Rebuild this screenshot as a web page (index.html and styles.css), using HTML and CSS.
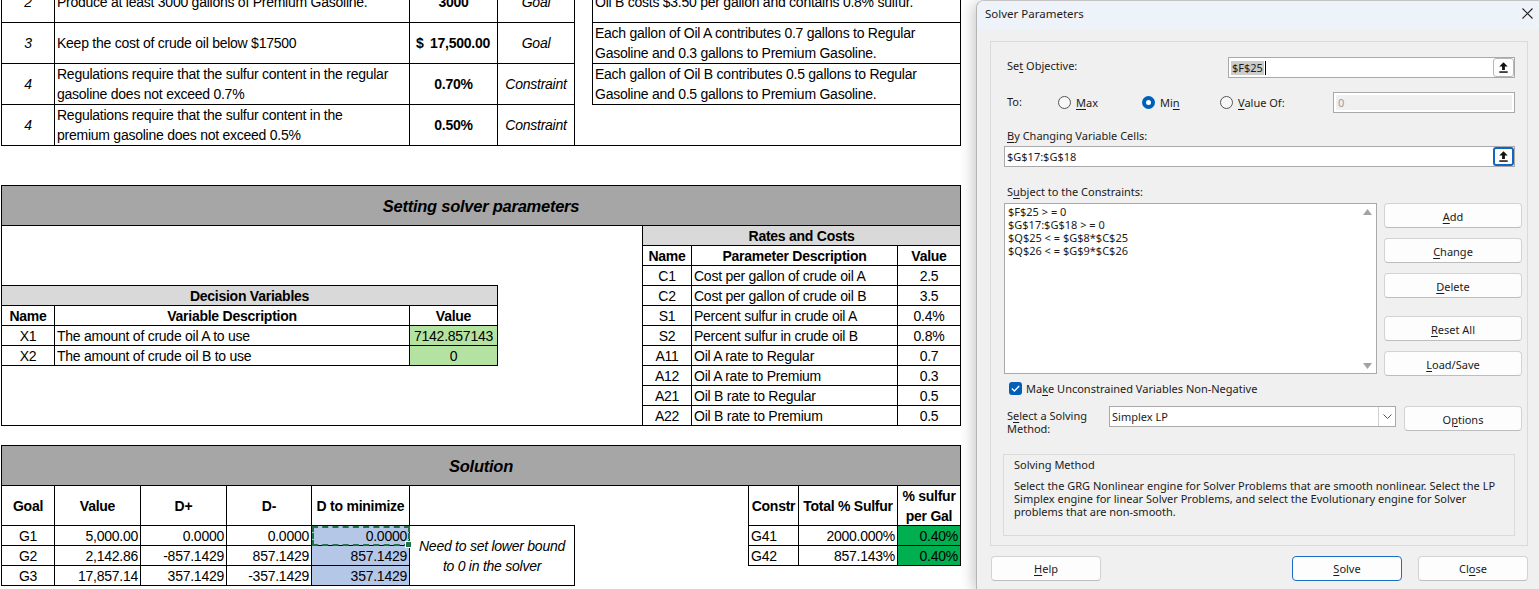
FILE: index.html
```html
<!DOCTYPE html>
<html>
<head>
<meta charset="utf-8">
<title>Solver Parameters</title>
<link rel="stylesheet" href="styles.css">
</head>
<body>
<div class="sheet">
  <div class="sec1">
    <div class="goals">
      <div class="c num">2</div>
      <div class="c desc">Produce at least 3000 gallons of Premium Gasoline.</div>
      <div class="c val">3000</div>
      <div class="c kind">Goal</div>
      <div class="c num">3</div>
      <div class="c desc">Keep the cost of crude oil below $17500</div>
      <div class="c val acct"><span>$</span><span>17,500.00</span></div>
      <div class="c kind">Goal</div>
      <div class="c num">4</div>
      <div class="c desc">Regulations require that the sulfur content in the regular<br>gasoline does not exceed 0.7%</div>
      <div class="c val">0.70%</div>
      <div class="c kind">Constraint</div>
      <div class="c num end">4</div>
      <div class="c desc end">Regulations require that the sulfur content in the<br>premium gasoline does not exceed 0.5%</div>
      <div class="c val end">0.50%</div>
      <div class="c kind end">Constraint</div>
    </div>
    <div class="notes">
      <div class="note">Oil B costs $3.50 per gallon and contains 0.8% sulfur.</div>
      <div class="note">Each gallon of Oil A contributes 0.7 gallons to Regular<br>Gasoline and 0.3 gallons to Premium Gasoline.</div>
      <div class="note">Each gallon of Oil B contributes 0.5 gallons to Regular<br>Gasoline and 0.5 gallons to Premium Gasoline.</div>
    </div>
  </div>

  <div class="sec2">
    <div class="band">Setting solver parameters</div>
    <div class="sec2-body">
      <div class="dv">
        <div class="c hd span3">Decision Variables</div>
        <div class="c b">Name</div>
        <div class="c b">Variable Description</div>
        <div class="c b">Value</div>
        <div class="c">X1</div>
        <div class="c l">The amount of crude oil A to use</div>
        <div class="c green">7142.857143</div>
        <div class="c">X2</div>
        <div class="c l">The amount of crude oil B to use</div>
        <div class="c green">0</div>
      </div>
      <div class="rates">
        <div class="c hd span3 nr">Rates and Costs</div>
        <div class="c b">Name</div>
        <div class="c b">Parameter Description</div>
        <div class="c b nr">Value</div>
        <div class="c">C1</div><div class="c l">Cost per gallon of crude oil A</div><div class="c nr">2.5</div>
        <div class="c">C2</div><div class="c l">Cost per gallon of crude oil B</div><div class="c nr">3.5</div>
        <div class="c">S1</div><div class="c l">Percent sulfur in crude oil A</div><div class="c nr">0.4%</div>
        <div class="c">S2</div><div class="c l">Percent sulfur in crude oil B</div><div class="c nr">0.8%</div>
        <div class="c">A11</div><div class="c l">Oil A rate to Regular</div><div class="c nr">0.7</div>
        <div class="c">A12</div><div class="c l">Oil A rate to Premium</div><div class="c nr">0.3</div>
        <div class="c">A21</div><div class="c l">Oil B rate to Regular</div><div class="c nr">0.5</div>
        <div class="c nb">A22</div><div class="c l nb">Oil B rate to Premium</div><div class="c nr nb">0.5</div>
      </div>
    </div>
  </div>

  <div class="sec3">
    <div class="band">Solution</div>
    <div class="sec3-body">
      <div class="sol">
        <div class="c b">Goal</div>
        <div class="c b">Value</div>
        <div class="c b">D+</div>
        <div class="c b">D-</div>
        <div class="c b">D to minimize</div>
        <div class="c nr"></div>
        <div class="c">G1</div>
        <div class="c r">5,000.00</div>
        <div class="c r">0.0000</div>
        <div class="c r">0.0000</div>
        <div class="c r blue copy">0.0000</div>
        <div class="c memo">Need to set lower bound<br>to 0 in the solver</div>
        <div class="c">G2</div>
        <div class="c r">2,142.86</div>
        <div class="c r">-857.1429</div>
        <div class="c r">857.1429</div>
        <div class="c r blue">857.1429</div>
        <div class="c">G3</div>
        <div class="c r">17,857.14</div>
        <div class="c r">357.1429</div>
        <div class="c r">-357.1429</div>
        <div class="c r blue">357.1429</div>
      </div>
      <div class="constr">
        <div class="c b">Constr</div>
        <div class="c b">Total % Sulfur</div>
        <div class="c b two">% sulfur<br>per Gal</div>
        <div class="c l">G41</div>
        <div class="c r">2000.000%</div>
        <div class="c r dgreen">0.40%</div>
        <div class="c l">G42</div>
        <div class="c r">857.143%</div>
        <div class="c r dgreen">0.40%</div>
      </div>
    </div>
  </div>
</div>

<div class="dialog">
  <div class="titlebar">
    <span>Solver Parameters</span>
    <svg class="close" width="11" height="11" viewBox="0 0 11 11"><path d="M0.5 0.5 L10.5 10.5 M10.5 0.5 L0.5 10.5" stroke="#222" stroke-width="1.1" fill="none"/></svg>
  </div>
  <div class="panel">
    <div class="row obj-row">
      <span class="lbl obj-lbl">Se<u>t</u> Objective:</span>
      <div class="input obj">
        <span class="sel">$F$25</span><span class="caret"></span>
        <span class="ref"><svg width="9" height="11" viewBox="0 0 9 11"><path d="M4.5 0.3 L8.7 4.6 H5.9 V8 H3.1 V4.6 H0.3 Z" fill="#111"/><rect x="0.3" y="9.3" width="8.4" height="1.5" fill="#111"/></svg></span>
      </div>
    </div>
    <div class="row to-row">
      <span class="lbl to-lbl">To:</span>
      <span class="radio r-max"><i class="rb"></i><span><u>M</u>ax</span></span>
      <span class="radio r-min"><i class="rb on"></i><span>Mi<u>n</u></span></span>
      <span class="radio r-val"><i class="rb"></i><span><u>V</u>alue Of:</span></span>
      <div class="input dis">0</div>
    </div>
    <div class="lbl by-lbl"><u>B</u>y Changing Variable Cells:</div>
    <div class="input var">
      <span class="vtext">$G$17:$G$18</span>
      <span class="ref focus"><svg width="9" height="11" viewBox="0 0 9 11"><path d="M4.5 0.3 L8.7 4.6 H5.9 V8 H3.1 V4.6 H0.3 Z" fill="#111"/><rect x="0.3" y="9.3" width="8.4" height="1.5" fill="#111"/></svg></span>
    </div>
    <div class="lbl subj-lbl">S<u>u</u>bject to the Constraints:</div>
    <div class="cons">
      <div class="list">
        <div class="items">
          <div>$F$25 &gt; = 0</div>
          <div>$G$17:$G$18 &gt; = 0</div>
          <div>$Q$25 &lt; = $G$8*$C$25</div>
          <div>$Q$26 &lt; = $G$9*$C$26</div>
        </div>
        <div class="sb">
          <svg width="9" height="6" viewBox="0 0 9 6"><path d="M0 6 L4.5 0 L9 6 Z" fill="#a3a3a3"/></svg>
          <svg width="9" height="6" viewBox="0 0 9 6"><path d="M0 0 L4.5 6 L9 0 Z" fill="#a3a3a3"/></svg>
        </div>
      </div>
      <div class="btns">
        <span class="btn"><span><u>A</u>dd</span></span>
        <span class="btn"><span><u>C</u>hange</span></span>
        <span class="btn"><span><u>D</u>elete</span></span>
        <span class="btn gap"><span><u>R</u>eset All</span></span>
        <span class="btn"><span><u>L</u>oad/Save</span></span>
      </div>
    </div>
    <div class="chkrow">
      <span class="cb"><svg width="9" height="7" viewBox="0 0 9 7"><path d="M0.8 3.6 L3.4 6 L8.2 0.9" stroke="#fff" stroke-width="1.4" fill="none"/></svg></span>
      <span>Ma<u>k</u>e Unconstrained Variables Non-Negative</span>
    </div>
    <div class="method">
      <span class="lbl m-lbl">S<u>e</u>lect a Solving<br>Method:</span>
      <div class="dropdown">
        <span class="dtext">Simplex LP</span>
        <span class="chev"><svg width="9" height="5" viewBox="0 0 9 5"><path d="M0.5 0.5 L4.5 4.5 L8.5 0.5" stroke="#555" fill="none"/></svg></span>
      </div>
      <span class="btn opt"><span>O<u>p</u>tions</span></span>
    </div>
    <div class="smbox">
      <div class="sm-title">Solving Method</div>
      <div class="sm-text">Select the GRG Nonlinear engine for Solver Problems that are smooth nonlinear. Select the LP<br>Simplex engine for linear Solver Problems, and select the Evolutionary engine for Solver<br>problems that are non-smooth.</div>
    </div>
  </div>
  <div class="footer">
    <span class="btn fbtn"><span><u>H</u>elp</span></span>
    <span class="btn fbtn solve"><span><u>S</u>olve</span></span>
    <span class="btn fbtn close-btn"><span>Cl<u>o</u>se</span></span>
  </div>
</div>
</body>
</html>
```

FILE: styles.css
```css
* { box-sizing: border-box; }
html, body { margin: 0; padding: 0; }
body {
  width: 1539px;
  height: 589px;
  overflow: hidden;
  background: #fff;
  display: flex;
  align-items: flex-start;
  font-family: "Liberation Sans", Arial, sans-serif;
  color: #000;
}

/* ---------- spreadsheet ---------- */
.sheet {
  width: 976px;
  flex: none;
  padding-left: 1px;
  font-size: 14px;
  letter-spacing: -0.25px;
}
.c {
  display: flex;
  align-items: center;
  justify-content: center;
  white-space: nowrap;
  overflow: hidden;
  line-height: 20px;
  padding-top: 1px;
  border-right: 1px solid #000;
  border-bottom: 1px solid #000;
}
.c.l { justify-content: flex-start; padding-left: 2px; }
.c.r { justify-content: flex-end; padding-right: 2px; }
.c.b { font-weight: bold; }
.c.nr { border-right: none; }
.c.nb { border-bottom: none; }

.sec1 {
  display: flex;
  width: 960px;
  margin-top: -18px;
  border-left: 1px solid #000;
  border-right: 1px solid #000;
  border-bottom: 1px solid #000;
}
.goals {
  display: grid;
  grid-template-columns: 53px 355px 88px 77px;
  grid-template-rows: 41px 41px 41px 40px;
}
.goals .c { line-height: 20px; padding-top: 0; }
.goals .end { border-bottom: none; }
.goals .num { font-style: italic; }
.goals .desc { justify-content: flex-start; padding-left: 2px; }
.goals .val { font-weight: bold; }
.goals .acct { justify-content: space-between; padding: 0 7px 0 6px; }
.goals .kind { font-style: italic; }
.notes {
  margin-left: 17px;
  width: 368px;
  align-self: flex-start;
  display: grid;
  grid-template-rows: 41px 41px 41px;
}
.note {
  display: flex;
  align-items: center;
  padding-left: 2px;
  line-height: 20px;
  white-space: nowrap;
  border-left: 1px solid #000;
  border-bottom: 1px solid #000;
}

.band {
  height: 40px;
  padding-top: 2px;
  background: #a6a6a6;
  border-bottom: 1px solid #000;
  display: flex;
  align-items: center;
  justify-content: center;
  font-weight: bold;
  font-style: italic;
  font-size: 16.5px;
}
.sec2 {
  margin-top: 39px;
  width: 960px;
  border: 1px solid #000;
}
.sec2-body {
  height: 199px;
  display: flex;
  justify-content: space-between;
  align-items: flex-start;
}
.hd { background: #d9d9d9; font-weight: bold; }
.span3 { grid-column: 1 / -1; }
.dv {
  margin-top: 59px;
  display: grid;
  grid-template-columns: 53px 355px 88px;
  grid-template-rows: repeat(4, 20px);
  border-top: 1px solid #000;
}
.green { background: #b4e3a1; }
.rates {
  display: grid;
  grid-template-columns: 49px 206px 62px;
  grid-template-rows: repeat(9, 20px) 19px;
  border-left: 1px solid #000;
}

.sec3 {
  margin-top: 19px;
  width: 960px;
}
.sec3 .band { height: 41px; border: 1px solid #000; }
.sec3-body {
  display: flex;
  align-items: flex-start;
}
.sol {
  display: grid;
  grid-template-columns: 53px 86px 86px 85px 98px 165px;
  grid-template-rows: 40px 20px 20px 20px;
  border-left: 1px solid #000;
}
.blue { background: #b4c7e7; }
.copy {
  position: relative;
  overflow: visible;
  outline: 2px dashed #217346;
  outline-offset: -2px;
}
.copy::after {
  content: "";
  position: absolute;
  right: -3px;
  bottom: -3px;
  width: 5px;
  height: 5px;
  background: #217346;
  border: 1px solid #fff;
}
.memo {
  grid-column: 6;
  grid-row: 2 / span 3;
  font-style: italic;
  line-height: 20px;
  padding-top: 0;
  text-align: center;
}
.constr {
  margin-left: auto;
  display: grid;
  grid-template-columns: 50px 99px 63px;
  grid-template-rows: 40px 20px 20px;
  border-left: 1px solid #000;
}
.constr .two { line-height: 20px; padding-top: 0; text-align: center; }
.dgreen { background: #00b050; }

/* ---------- dialog ---------- */
.dialog {
  position: relative;
  z-index: 1;
  flex: none;
  width: 563px;
  height: 589px;
  background: #f0f0f0;
  border-top: 1px solid #c4c4c4;
  border-left: 1px solid #b5b5b5;
  border-top-left-radius: 8px;
  box-shadow: -3px 2px 14px rgba(0, 0, 0, 0.22);
  font-family: "Noto Sans", "Open Sans", sans-serif;
  font-size: 11px;
  color: #1b1b1b;
}
.dialog u { text-decoration-thickness: 1px; text-underline-offset: 2px; }
.titlebar {
  height: 28px;
  background: #eef2f9;
  border-top-left-radius: 7px;
  display: flex;
  align-items: center;
  justify-content: space-between;
  padding: 0 6px 4px 8px;
  font-size: 11.5px;
}
.panel {
  margin: 12px 11px 0 13px;
  height: 505px;
  border: 1px solid #dadada;
  padding: 15px 5px 0 13px;
}
.row {
  width: 511px;
  height: 21px;
  display: flex;
  align-items: center;
}
.lbl { line-height: 15px; padding-left: 3px; white-space: nowrap; }
.obj-row .lbl { margin-top: -4px; }
.to-row .lbl { margin-top: -2px; }
.obj-lbl { width: 224px; }
.input {
  height: 21px;
  background: #fff;
  border: 1px solid #a9a9a9;
  display: flex;
  align-items: center;
  padding-left: 2px;
}
.obj { width: 287px; }
.sel { background: #cccccc; padding: 0 1px; line-height: 14px; }
.caret { width: 1px; height: 14px; background: #000; margin-left: 1px; }
.ref {
  margin-left: auto;
  width: 21px;
  height: 19px;
  background: #fdfdfd;
  border: 1px solid #b8b8b8;
  border-radius: 3px;
  display: flex;
  align-items: center;
  justify-content: center;
}
.ref.focus { border: 2px solid #1266c2; }
.to-row { margin-top: 14px; }
.to-lbl { width: 54px; }
.radio { display: flex; align-items: center; gap: 5px; }
.r-max { width: 84px; }
.r-min { width: 78px; }
.r-val { width: 113px; }
.rb {
  width: 13px;
  height: 13px;
  border-radius: 50%;
  border: 1px solid #555;
  background: #f8f8f8;
  display: flex;
  align-items: center;
  justify-content: center;
}
.rb.on { border: none; background: #005fb8; }
.rb.on::after {
  content: "";
  width: 5px;
  height: 5px;
  border-radius: 50%;
  background: #fff;
}
.dis {
  width: 182px;
  background: #f0f0f0;
  border-color: #a9a9a9;
  box-shadow: inset 0 0 0 2px #fff;
  color: #9a9a9a;
  padding-left: 4px;
}
.by-lbl { margin-top: 15px; margin-bottom: 1px; }
.var { width: 511px; margin-top: 3px; }
.subj-lbl { margin-top: 17px; }
.cons {
  margin-top: 4px;
  display: flex;
  gap: 7px;
  align-items: flex-start;
}
.list {
  width: 373px;
  height: 171px;
  background: #fff;
  border: 1px solid #a9a9a9;
  display: flex;
}
.items {
  flex: 1;
  padding: 1px 0 0 3px;
  font-size: 11px;
  line-height: 13px;
  white-space: nowrap;
}
.sb {
  width: 18px;
  display: flex;
  flex-direction: column;
  justify-content: space-between;
  align-items: center;
  padding: 5px 0 4px;
}
.btns { width: 138px; display: flex; flex-direction: column; gap: 10px; }
.btn {
  height: 25px;
  background: #fdfdfd;
  border: 1px solid #d3d3d3;
  border-bottom-color: #bdbdbd;
  border-radius: 4px;
  display: flex;
  align-items: center;
  justify-content: center;
  line-height: 15px;
}
.btns .btn, .opt { padding-top: 2px; }
.btn.gap { margin-top: 8px; }
.chkrow {
  margin-top: 5px;
  height: 14px;
  display: flex;
  align-items: center;
  gap: 4px;
}
.cb {
  margin-left: 5px;
  width: 13px;
  height: 13px;
  border-radius: 3px;
  background: #005fb8;
  display: flex;
  align-items: center;
  justify-content: center;
}
.method {
  margin-top: 11px;
  height: 25px;
  display: flex;
  align-items: flex-start;
}
.m-lbl { width: 105px; line-height: 13px; padding-top: 3px; }
.dropdown {
  width: 287px;
  height: 21px;
  background: #fff;
  border: 1px solid #a9a9a9;
  display: flex;
  align-items: center;
}
.dtext { flex: 1; padding-left: 2px; }
.chev {
  width: 17px;
  height: 19px;
  border-left: 1px solid #d0d0d0;
  display: flex;
  align-items: center;
  justify-content: center;
}
.opt { width: 118px; margin-left: 8px; }
.smbox {
  margin-top: 23px;
  margin-left: -1px;
  width: 512px;
  height: 82px;
  border: 1px solid #dadada;
  padding: 3px 8px 0 10px;
}
.sm-title { line-height: 13px; }
.sm-text { margin-top: 8px; line-height: 13px; white-space: nowrap; }
.footer {
  margin-top: 10px;
  display: flex;
  padding: 0 11px 0 14px;
}
.fbtn { width: 110px; }
.solve { margin-left: auto; border: 1px solid #1a6fc4; }
.close-btn { margin-left: 16px; }
```
